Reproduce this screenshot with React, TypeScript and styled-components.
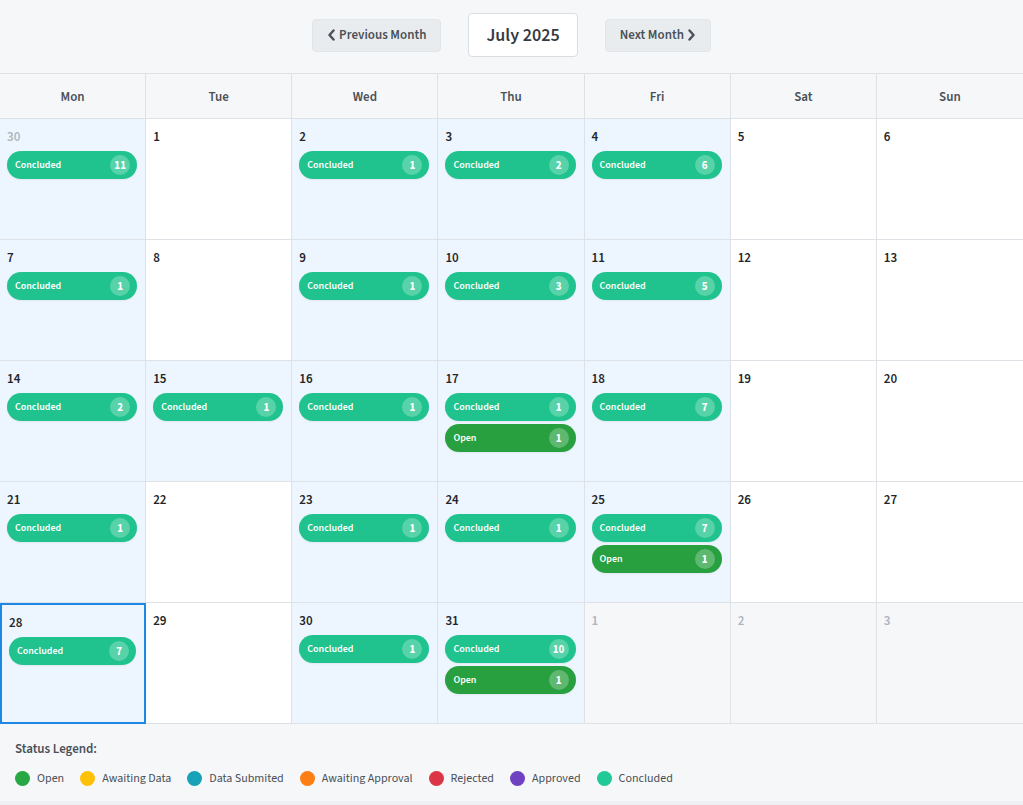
import React from "react";
import styled, { createGlobalStyle } from "styled-components";

const Global = createGlobalStyle`
  html, body { margin: 0; padding: 0; background: #eef0f3; }
  body { font-family: "Source Sans Pro", "Source Sans 3", Lato, "Noto Sans", sans-serif; color: #212529; }
  * { box-sizing: border-box; }
`;

const Shell = styled.div`
  width: 1023px;
  background: #f6f7f9;
  box-shadow: 0 2px 4px rgba(0, 0, 0, 0.06);
`;

const Toolbar = styled.div`
  height: 73px;
  display: flex;
  align-items: center;
  justify-content: center;
  gap: 27px;
  padding-bottom: 3px;
`;

const NavButton = styled.button`
  height: 33px;
  display: inline-flex;
  align-items: center;
  gap: 3px;
  padding: 0 14px;
  border: 1px solid #e3e6e9;
  border-radius: 4px;
  background: #e9ecef;
  color: #495057;
  font-family: inherit;
  font-size: 13px;
  font-weight: 600;
  cursor: pointer;
  svg { display: block; }
`;

const MonthTitle = styled.div`
  height: 44px;
  padding: 0 17px;
  display: flex;
  align-items: center;
  background: #fff;
  border: 1px solid #dadee2;
  border-radius: 4px;
  font-size: 18px;
  font-weight: 600;
  color: #343a40;
`;

const Grid = styled.div`
  display: grid;
  grid-template-columns: repeat(7, 1fr);
  grid-template-rows: 45px repeat(5, 121px);
  border-top: 1px solid #dee2e6;
`;

const HeadCell = styled.div`
  display: flex;
  align-items: center;
  justify-content: center;
  padding-top: 2px;
  background: #f6f7f9;
  border-right: 1px solid #dee2e6;
  border-bottom: 1px solid #dee2e6;
  font-size: 13px;
  font-weight: 600;
  color: #495057;
  &:nth-child(7) { border-right: none; }
`;

type Tone = "event" | "plain" | "other";

const DayCell = styled.div<{ $tone: Tone; $today?: boolean; $last?: boolean }>`
  display: flex;
  flex-direction: column;
  gap: 3px;
  padding: 8px 8px 8px 7px;
  background: ${(p) => (p.$tone === "event" ? "#edf5fe" : p.$tone === "other" ? "#f6f7f9" : "#ffffff")};
  border-right: ${(p) => (p.$last ? "none" : "1px solid #dee2e6")};
  border-bottom: 1px solid #dee2e6;
  ${(p) => (p.$today ? "border: 2px solid #1e88e5;" : "")}
`;

const DayNum = styled.div<{ $muted?: boolean }>`
  font-size: 13px;
  font-weight: 600;
  line-height: 20px;
  margin-bottom: 1px;
  color: ${(p) => (p.$muted ? "#adb5bd" : "#212529")};
`;

const Pill = styled.div<{ $color: string }>`
  height: 28px;
  display: flex;
  align-items: center;
  justify-content: space-between;
  padding: 0 7px 0 8px;
  border-radius: 14px;
  background: ${(p) => p.$color};
  color: #fff;
  font-size: 10px;
  font-weight: 600;
  box-shadow: 0 1px 2px rgba(0, 0, 0, 0.06);
`;

const Count = styled.span`
  min-width: 20px;
  height: 20px;
  padding: 0 4px;
  border-radius: 10px;
  display: inline-flex;
  align-items: center;
  justify-content: center;
  background: rgba(255, 255, 255, 0.25);
  font-size: 11px;
  font-weight: 700;
`;

const Legend = styled.div`
  padding: 13px 15px 14px;
  display: flex;
  flex-direction: column;
  gap: 10px;
`;

const LegendTitle = styled.div`
  font-size: 13px;
  font-weight: 600;
  color: #495057;
  line-height: 22px;
  padding-top: 1px;
`;

const LegendRow = styled.div`
  display: flex;
  align-items: center;
  gap: 16px;
`;

const LegendItem = styled.div`
  display: flex;
  align-items: center;
  gap: 7px;
  font-size: 12px;
  color: #495057;
`;

const Dot = styled.span<{ $color: string }>`
  width: 15px;
  height: 15px;
  border-radius: 50%;
  background: ${(p) => p.$color};
`;

const COLORS = {
  Open: "#28a03f",
  "Awaiting Data": "#ffc107",
  "Data Submited": "#17a2b8",
  "Awaiting Approval": "#fd7e14",
  Rejected: "#dc3545",
  Approved: "#6f42c1",
  Concluded: "#20c38d",
} as const;

type Ev = [keyof typeof COLORS, number];
type Day = { n: number; muted?: boolean; ev?: Ev[]; today?: boolean };

const C = (n: number): Ev[] => [["Concluded", n]];

const weeks: Day[][] = [
  [
    { n: 30, muted: true, ev: C(11) },
    { n: 1 },
    { n: 2, ev: C(1) },
    { n: 3, ev: C(2) },
    { n: 4, ev: C(6) },
    { n: 5 },
    { n: 6 },
  ],
  [
    { n: 7, ev: C(1) },
    { n: 8 },
    { n: 9, ev: C(1) },
    { n: 10, ev: C(3) },
    { n: 11, ev: C(5) },
    { n: 12 },
    { n: 13 },
  ],
  [
    { n: 14, ev: C(2) },
    { n: 15, ev: C(1) },
    { n: 16, ev: C(1) },
    { n: 17, ev: [["Concluded", 1], ["Open", 1]] },
    { n: 18, ev: C(7) },
    { n: 19 },
    { n: 20 },
  ],
  [
    { n: 21, ev: C(1) },
    { n: 22 },
    { n: 23, ev: C(1) },
    { n: 24, ev: C(1) },
    { n: 25, ev: [["Concluded", 7], ["Open", 1]] },
    { n: 26 },
    { n: 27 },
  ],
  [
    { n: 28, ev: C(7), today: true },
    { n: 29 },
    { n: 30, ev: C(1) },
    { n: 31, ev: [["Concluded", 10], ["Open", 1]] },
    { n: 1, muted: true },
    { n: 2, muted: true },
    { n: 3, muted: true },
  ],
];

const Chevron = ({ dir }: { dir: "l" | "r" }) => (
  <svg width="9" height="12" viewBox="0 0 9 12" fill="none">
    <path
      d={dir === "l" ? "M6.5 1.5 L2.5 6 L6.5 10.5" : "M2.5 1.5 L6.5 6 L2.5 10.5"}
      stroke="#495057"
      strokeWidth="2.4"
      strokeLinecap="round"
      strokeLinejoin="round"
    />
  </svg>
);

export default function App() {
  return (
    <>
      <Global />
      <Shell>
        <Toolbar>
          <NavButton>
            <Chevron dir="l" />
            Previous Month
          </NavButton>
          <MonthTitle>July 2025</MonthTitle>
          <NavButton>
            Next Month
            <Chevron dir="r" />
          </NavButton>
        </Toolbar>
        <Grid>
          {["Mon", "Tue", "Wed", "Thu", "Fri", "Sat", "Sun"].map((d) => (
            <HeadCell key={d}>{d}</HeadCell>
          ))}
          {weeks.flatMap((w, wi) =>
            w.map((d, di) => {
              const tone: Tone = d.ev ? "event" : d.muted ? "other" : "plain";
              return (
                <DayCell key={`${wi}-${di}`} $tone={tone} $today={d.today} $last={di === 6}>
                  <DayNum $muted={d.muted}>{d.n}</DayNum>
                  {d.ev?.map(([label, count]) => (
                    <Pill key={label} $color={COLORS[label]}>
                      <span>{label}</span>
                      <Count>{count}</Count>
                    </Pill>
                  ))}
                </DayCell>
              );
            })
          )}
        </Grid>
        <Legend>
          <LegendTitle>Status Legend:</LegendTitle>
          <LegendRow>
            {(Object.keys(COLORS) as (keyof typeof COLORS)[]).map((k) => (
              <LegendItem key={k}>
                <Dot $color={k === "Open" ? "#28a745" : k === "Concluded" ? "#20c997" : COLORS[k]} />
                {k}
              </LegendItem>
            ))}
          </LegendRow>
        </Legend>
      </Shell>
    </>
  );
}
